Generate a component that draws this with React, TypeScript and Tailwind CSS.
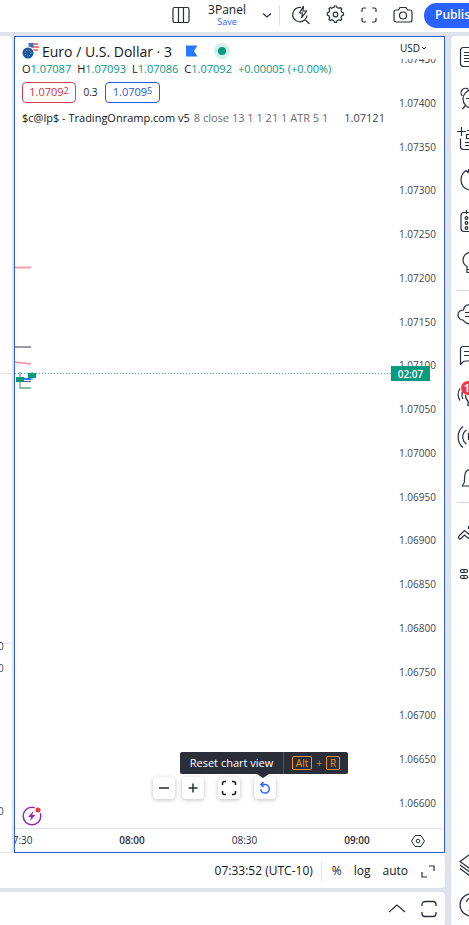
import React from 'react';

interface SideIcon {
  name: string;
  art: React.ReactNode;
}

const prices = [
  '1.07450', '1.07400', '1.07350', '1.07300', '1.07250', '1.07200',
  '1.07150', '1.07100', '1.07050', '1.07000', '1.06950', '1.06900',
  '1.06850', '1.06800', '1.06750', '1.06700', '1.06650', '1.06600',
];

const ohlc = [
  { label: 'O', value: '1.07087' },
  { label: 'H', value: '1.07093' },
  { label: 'L', value: '1.07086' },
  { label: 'C', value: '1.07092' },
];

const toolIcons: SideIcon[] = [
  {
    name: 'Watchlist',
    art: <path d="M20 4.500h-7.500a3 3 0 0 0-3 3v13a3 3 0 0 0 3 3H20M13 9.500h6M13 12.500h6M13 15.500h6M13 18.500h6" />,
  },
  {
    name: 'Alerts',
    art: (
      <>
        <circle cx="21" cy="15" r="9" />
        <path d="M11.500 12a4 4 0 0 1 6-6.500M14.500 21.500l-3 3.500M15 14.500h5" />
      </>
    ),
  },
  {
    name: 'Data window',
    art: <path d="M10.500 2v9M6 6.500h9M9.500 13.500v8a3 3 0 0 0 3 3H20M20 9.500h-4.500v4H20M14 17.500h6M14 20.500h6M16 5.500h4" />,
  },
  {
    name: 'Hotlists',
    art: <path d="M20 8l-2.500-4-.5 2.500-2-2C11.500 7 10 10.500 10 14c0 5 3.500 9.500 8 10" />,
  },
  {
    name: 'Calendar',
    art: (
      <>
        <path d="M20 5.500h-7a3 3 0 0 0-3 3v13a3 3 0 0 0 3 3h7M15.500 3v4" />
        <circle cx="15.500" cy="11" r="1.300" />
        <circle cx="15.500" cy="16" r="1.300" />
        <circle cx="15.500" cy="21" r="1.300" />
      </>
    ),
  },
  {
    name: 'Ideas',
    art: <path d="M20 4.500c-4.500 0-8 3.200-8 7.500 0 3 1.500 5 4 6.500v6h4M16 21.500h4" />,
  },
];

const chatIcons: SideIcon[] = [
  {
    name: 'Public chats',
    art: <path d="M20 4.500c-4 0-7 1.500-7.500 5.500-3 .2-5.500 2-5.500 5s2.500 5 5 5c1.500 2.500 4.500 4 8 4M14 12.500h6M14 16.500h6" />,
  },
  {
    name: 'Private chats',
    art: <path d="M20 5.500h-8a2.500 2.500 0 0 0-2.500 2.500v15.500c1.500-1 2-3.500 5-3.500H20M13 10.500h7M13 14.500h7" />,
  },
  {
    name: 'Ideas stream',
    art: <path d="M9 6.500c-2.500 4-2.500 8 0 12M12 8.500c-1.500 3-1.500 5.500 0 8.500M14.500 13c0 3 1 5 2.500 6v4.500h3M17 20.500h3" />,
  },
  {
    name: 'Streams',
    art: (
      <>
        <path d="M12 3.500c-6.500 5-6.500 16 0 21M15.500 7c-5 3.500-5 10.500 0 14" />
        <rect x="17.500" y="10.500" width="5" height="6" />
      </>
    ),
  },
  {
    name: 'Notifications',
    art: <path d="M20 5.500c-4 0-6 2.500-6.300 6.500l-.4 6.500c-.3 1.500-1.800 1.500-1.800 3.500H20" />,
  },
];

const orderIcons: SideIcon[] = [
  {
    name: 'Order panel',
    art: <path d="M8 18l5.500-5.500 4 3.500 3-3M9.500 21l4-4 4 3.500 3-3M8 18c-1 1.500 0 3.500 1.500 3M17.500 8v2.500h2.500" />,
  },
  {
    name: 'Depth of market',
    art: (
      <>
        <rect x="9.500" y="10.500" width="7" height="3" rx="1.500" />
        <rect x="9.500" y="16.500" width="7" height="3" rx="1.500" />
        <path d="M13 10.500v3M13 16.500v3" />
      </>
    ),
  },
];

const bottomIcons: SideIcon[] = [
  {
    name: 'Object tree',
    art: <path d="M20 3.500l-11 8 11 8M9 15l11 8M9 18.500l10 7.500" />,
  },
  {
    name: 'Help',
    art: (
      <>
        <circle cx="20" cy="14" r="11" />
        <path d="M15.500 11c.5-3 2-4 4.500-4M17.500 19.500h1.500" />
      </>
    ),
  },
];

const SideGroup: React.FC<{ icons: SideIcon[] }> = ({ icons }) => (
  <div className="flex flex-col">
    {icons.map((icon) => (
      <button key={icon.name} type="button" aria-label={icon.name} className="relative flex h-[41px] items-center">
        <svg width="18" height="28" viewBox="0 0 18 28" fill="none" stroke="#2a2e39" strokeWidth="1.2">
          {icon.art}
        </svg>
        {icon.name === 'Ideas stream' && (
          <span className="absolute top-1.5 left-2.5 flex h-3.5 w-3.5 items-center rounded-full bg-[#f23645] pl-[3px] text-[10px] font-bold text-white">
            1
          </span>
        )}
      </button>
    ))}
  </div>
);

const Header: React.FC = () => (
  <header className="flex h-8 shrink-0 items-center justify-end overflow-hidden bg-white pb-0.5">
    <button type="button" aria-label="Select layout" className="mr-3.5">
      <svg width="20" height="20" viewBox="0 0 20 20" fill="none" stroke="#2a2e39" strokeWidth="1.2">
        <rect x="2" y="2.500" width="16" height="15" rx="1.500" />
        <path d="M7.500 2.500v15M12.500 2.500v15" />
      </svg>
    </button>
    <button type="button" className="flex w-11 flex-col items-center">
      <span className="text-[12px] leading-[14px]">3Panel</span>
      <span className="text-[9px] leading-[10px] text-[#2962ff]">Save</span>
    </button>
    <button type="button" aria-label="Layout menu" className="ml-2 w-5">
      <svg width="20" height="20" viewBox="0 0 20 20" fill="none" stroke="#2a2e39" strokeWidth="1.2">
        <path d="M6 8.500l4 3.500 4-3.500" />
      </svg>
    </button>
    <span className="mr-1 ml-0.5 h-5 w-px bg-[#e0e3eb]" />
    <div className="flex items-center gap-2.5 pr-[9px] pl-[5px]">
      <button type="button" aria-label="Quick search">
        <svg width="24" height="24" viewBox="0 0 24 24" fill="none" stroke="#2a2e39" strokeWidth="1.2">
          <path d="M12 4.500a7.200 7.200 0 1 0 6 8M16.500 17l4 4M14.500 3l-4 7h3l-1 5 5-7h-3.500z" />
        </svg>
      </button>
      <button type="button" aria-label="Settings">
        <svg width="24" height="24" viewBox="0 0 24 24" fill="none" stroke="#2a2e39" strokeWidth="1.2">
          <path d="M10 4.500h1l.5-1.500h2l.5 1.500 2 .8 1.500-.8 1.300 1.300-.8 1.500.8 2 1.700.7v2l-1.700.7-.8 2 .8 1.500-1.300 1.500-1.500-.9-2 .9-.5 1.700h-2l-.7-1.700-2-.9-1.500.9-1.400-1.500.8-1.500-.8-2-1.600-.7v-2l1.600-.7.8-2-.8-1.500 1.400-1.300 1.500.8z" />
          <circle cx="12.500" cy="11.500" r="2.300" />
        </svg>
      </button>
      <button type="button" aria-label="Fullscreen mode">
        <svg width="24" height="24" viewBox="0 0 24 24" fill="none" stroke="#2a2e39" strokeWidth="1.2">
          <path d="M5 9V6.500A1.500 1.500 0 0 1 6.500 5H9M15 5h2.500A1.500 1.500 0 0 1 19 6.500V9M19 15v2.500a1.500 1.500 0 0 1-1.500 1.500H15M9 19H6.500A1.500 1.500 0 0 1 5 17.500V15" />
        </svg>
      </button>
      <button type="button" aria-label="Take a snapshot">
        <svg width="24" height="24" viewBox="0 0 24 24" fill="none" stroke="#2a2e39" strokeWidth="1.2">
          <path d="M3 9a2 2 0 0 1 2-2h2.500l1.500-2.500h6L16.500 7H19a2 2 0 0 1 2 2v8a2 2 0 0 1-2 2H5a2 2 0 0 1-2-2z" />
          <circle cx="12" cy="12.500" r="3.500" />
        </svg>
      </button>
    </div>
    <button type="button" className="h-[25px] w-[45px] overflow-hidden rounded-l-full bg-[#2962ff] pl-[11px] text-left text-[12px] font-semibold whitespace-nowrap text-white">
      Publish
    </button>
  </header>
);

const Legend: React.FC = () => (
  <div className="absolute top-1 left-[7px] text-[11px] whitespace-nowrap">
    <div className="flex h-5 items-center text-[14px]">
      <svg width="17" height="18" viewBox="0 0 17 18">
        <circle cx="11.500" cy="5.500" r="5" fill="#fff" />
        <path d="M8 2h8M7 5h10M8 8h8" stroke="#ef5350" strokeWidth="1.500" />
        <path d="M6.500 1h5v4.500h-5z" fill="#3f6fc9" />
        <circle cx="6" cy="11" r="6.500" fill="#fff" />
        <circle cx="6" cy="11" r="5.500" fill="#1556a3" />
        <circle cx="6" cy="11" r="3" fill="none" stroke="#d9b84a" strokeWidth="1" strokeDasharray="1 1.400" />
      </svg>
      <span className="ml-[3px]">Euro / U.S. Dollar · 3</span>
      <svg className="ml-3.5" width="12" height="12" viewBox="0 0 12 12">
        <path d="M0 0.500h11.500L8 6l3.500 5.500H0z" fill="#2979ff" />
      </svg>
      <span className="ml-4 flex h-4 w-4 items-center justify-center rounded-full bg-[#d5f0eb]">
        <span className="h-2 w-2 rounded-full bg-[#089981]" />
      </span>
    </div>
    <div className="flex h-4 items-center gap-1.5 text-[#089981]">
      {ohlc.map((item) => (
        <span key={item.label}>
          <span className="text-[#131722]">{item.label}</span>
          {item.value}
        </span>
      ))}
      <span>+0.00005 (+0.00%)</span>
    </div>
    <div className="mt-[5px] flex items-center">
      <button type="button" className="flex h-[21px] w-[54px] items-center justify-center rounded-[4px] border border-[#d2414d] text-[#d8303f]">
        1.0709<sup className="top-[-2px] text-[9px]">2</sup>
      </button>
      <span className="w-[29px] text-center text-[10px]">0.3</span>
      <button type="button" className="flex h-[21px] w-[55px] items-center justify-center rounded-[4px] border border-[#2c5bd8] text-[#2456d8]">
        1.0709<sup className="top-[-2px] text-[9px]">5</sup>
      </button>
    </div>
    <div className="mt-[7px] flex h-4 items-center">
      <span>$c@lp$ - TradingOnramp.com v5</span>
      <span className="ml-1 text-[#6a6d78]">8 close 13 1 1 21 1 ATR 5 1</span>
      <span className="ml-4 text-[#434651]">1.07121</span>
    </div>
  </div>
);

const controlClass = 'flex h-[22px] w-[22px] items-center justify-center rounded-[4px] bg-white shadow-[0_1px_4px_rgba(0,0,0,0.25)]';

const ChartControls: React.FC = () => (
  <div className="absolute bottom-[29px] left-[138px]">
    <div className="relative ml-[27px] flex h-[22px] w-[168px] items-center rounded-[2px] bg-[#2a2e39] text-[11px] whitespace-nowrap text-white" role="tooltip">
      <span className="flex-1 text-center">Reset chart view</span>
      <span className="flex h-full w-[65px] items-center justify-center gap-1 border-l border-[#50535e] text-[10px] text-[#f7931a]">
        <kbd className="rounded-[2px] border border-[#f7931a] px-[3px] font-[inherit] leading-[12px]">Alt</kbd>
        <span>+</span>
        <kbd className="rounded-[2px] border border-[#f7931a] px-[3px] font-[inherit] leading-[12px]">R</kbd>
      </span>
      <span className="absolute top-full left-[77px] border-x-[6px] border-t-[4px] border-x-transparent border-t-[#2a2e39]" />
    </div>
    <div className="mt-[3px] flex">
      <button type="button" aria-label="Zoom out" className={controlClass}>
        <svg width="16" height="16" viewBox="0 0 16 16" stroke="#2a2e39" strokeWidth="1.500"><path d="M3 8h10" /></svg>
      </button>
      <button type="button" aria-label="Zoom in" className={`${controlClass} ml-[7px]`}>
        <svg width="16" height="16" viewBox="0 0 16 16" stroke="#2a2e39" strokeWidth="1.500"><path d="M3.500 8h9M8 3.500v9" /></svg>
      </button>
      <button type="button" aria-label="Maximize chart" className={`${controlClass} ml-[14px]`}>
        <svg width="16" height="16" viewBox="0 0 16 16" fill="none" stroke="#131722" strokeWidth="1.500">
          <path d="M1.500 5V3.500a2 2 0 0 1 2-2H5M11 1.500h1.500a2 2 0 0 1 2 2V5M14.500 11v1.500a2 2 0 0 1-2 2H11M5 14.500H3.500a2 2 0 0 1-2-2V11" />
        </svg>
      </button>
      <button type="button" aria-label="Reset chart" className={`${controlClass} ml-[14px]`}>
        <svg width="16" height="16" viewBox="0 0 16 16" fill="none" stroke="#2962ff" strokeWidth="1.500">
          <path d="M5 4.500H8a4.300 4.300 0 1 1-4.300 4.800M6.500 2L4 4.500 6.500 7" />
        </svg>
      </button>
    </div>
  </div>
);

const Chart: React.FC = () => (
  <section className="flex min-w-0 flex-1 flex-col border border-[#2f5bd3] bg-white">
    <div className="flex min-h-0 flex-1">
      <div className="relative min-w-0 flex-1">
        <div className="absolute inset-x-0 top-[336px] h-px bg-[repeating-linear-gradient(90deg,#3fb09d_0px,#3fb09d_1px,transparent_1px,transparent_3px)]" />
        <svg className="absolute top-[220px] left-0" width="24" height="140" viewBox="0 0 24 140" fill="none">
          <path d="M0 10.500h16" stroke="#f7a1a7" strokeWidth="2" />
          <path d="M0 90h16" stroke="#9b9ca1" strokeWidth="2" />
          <path d="M0 105l16 2" stroke="#f28b92" strokeWidth="1.500" />
          <path d="M5 115v16h11" stroke="#5fae7c" strokeWidth="1.300" />
          <path d="M7 124.500h9" stroke="#6a4f9c" />
          <path d="M7 122h9" stroke="#2979ff" strokeWidth="2" />
          <path d="M17 115v8" stroke="#089981" />
          <rect x="1" y="120" width="8" height="5" fill="#089981" />
          <rect x="13" y="116" width="8" height="5" fill="#089981" />
        </svg>
        <Legend />
        <ChartControls />
        <button type="button" aria-label="Go to events" className="absolute bottom-0.5 left-1.5">
          <svg width="22" height="20" viewBox="0 0 22 20" fill="none">
            <circle cx="11" cy="10" r="8.800" stroke="#9c27b0" strokeWidth="1.500" />
            <path d="M12.500 5L7 11h3.200L9 15l5.500-6h-3.200z" fill="#9c27b0" />
            <circle cx="17" cy="4" r="3.800" fill="#fff" />
            <circle cx="17" cy="4" r="2.500" fill="#f23645" />
          </svg>
        </button>
      </div>
      <div className="relative flex w-[53px] flex-col justify-between pt-4 pb-[19px] text-[10px] leading-[12px] text-[#434651]">
        {prices.map((price) => (
          <span key={price} className="pl-2">{price}</span>
        ))}
        <button type="button" className="absolute top-0 left-0 flex h-[22px] w-full items-center bg-white pl-[9px] text-[10px] text-[#131722]">
          USD
          <svg width="8" height="8" viewBox="0 0 8 8" fill="none" stroke="#131722"><path d="M2 3l2 2 2-2" /></svg>
        </button>
        <span className="absolute top-[329px] left-0 flex h-[15px] w-[39px] items-center justify-center bg-[#089981] text-[10px] font-semibold text-white">
          02:07
        </span>
      </div>
    </div>
    <div className="relative flex h-6 shrink-0 items-center overflow-hidden border-t border-[#e0e3eb] text-[10px] font-semibold text-[#2a2e39]">
      <span className="-ml-2 w-[70px] font-normal">07:30</span>
      <span className="w-[110px] text-center">08:00</span>
      <span className="w-[115px] text-center font-normal">08:30</span>
      <span className="w-[110px] text-center">09:00</span>
      <button type="button" aria-label="Axis settings" className="absolute right-[18px]">
        <svg width="16" height="16" viewBox="0 0 16 16" fill="none" stroke="#2a2e39">
          <path d="M5 2.500h6L14.500 8 11 13.500H5L1.500 8z" />
          <circle cx="8" cy="8" r="1.800" />
        </svg>
      </button>
    </div>
  </section>
);

const App: React.FC = () => {
  return (
    <div className="flex h-screen flex-col gap-1 overflow-hidden bg-[#e0e3eb] font-['Open_Sans','Noto_Sans',sans-serif] text-[#131722]">
      <Header />
      <div className="flex min-h-0 flex-1 gap-1.5">
        <div className="flex min-w-0 flex-1 flex-col">
          <main className="flex min-h-0 flex-1 gap-0.5">
            <section className="flex w-3 flex-col overflow-hidden rounded-tr-[4px] border-b border-[#e0e3eb] bg-white text-[10px] text-[#434651]">
              <div className="h-[338px] border-b border-[#e0e3eb]" />
              <div className="h-[270px] border-b border-[#e0e3eb]" />
              <span className="-mt-1.5 -ml-0.5 h-4 leading-4">0</span>
              <span className="mt-1.5 -ml-0.5 h-4 leading-4">0</span>
              <span className="mt-[127px] -ml-0.5 h-4 leading-4">0</span>
            </section>
            <Chart />
          </main>
          <div className="mb-1 flex h-[35px] shrink-0 items-center justify-end rounded-br-[4px] bg-white pr-[9px] text-[12px]">
            <button type="button">07:33:52 (UTC-10)</button>
            <span className="mr-2.5 ml-2 h-5 w-px bg-[#e0e3eb]" />
            <div className="flex items-center gap-3">
              <button type="button">%</button>
              <button type="button">log</button>
              <button type="button">auto</button>
              <button type="button" aria-label="Maximize">
                <svg width="16" height="16" viewBox="0 0 16 16" fill="none" stroke="#2a2e39" strokeWidth="1.200">
                  <path d="M2 9v5h5M9 3h5v5" />
                </svg>
              </button>
            </div>
          </div>
          <div className="flex h-[33px] shrink-0 items-center justify-end gap-3 rounded-tr-[4px] bg-white pr-1.5">
            <button type="button" aria-label="Open panel">
              <svg width="20" height="20" viewBox="0 0 20 20" fill="none" stroke="#2a2e39" strokeWidth="1.200">
                <path d="M2 13l8-7 8 7" />
              </svg>
            </button>
            <button type="button" aria-label="Maximize panel">
              <svg width="20" height="20" viewBox="0 0 20 20" fill="none" stroke="#2a2e39" strokeWidth="1.300">
                <path d="M3 7V5.500a3 3 0 0 1 3-3h8a3 3 0 0 1 3 3V7M3 13v1.500a3 3 0 0 0 3 3h8a3 3 0 0 0 3-3V13" />
              </svg>
            </button>
          </div>
        </div>
        <aside className="flex w-[18px] shrink-0 flex-col overflow-hidden rounded-tl-[4px] bg-white">
          <SideGroup icons={toolIcons} />
          <div className="mt-2 mb-0.5 ml-1.5 h-px shrink-0 bg-[#d1d4dc]" />
          <SideGroup icons={chatIcons} />
          <div className="mt-1 mb-2 ml-1.5 h-px shrink-0 bg-[#d1d4dc]" />
          <SideGroup icons={orderIcons} />
          <div className="mt-auto">
            <SideGroup icons={bottomIcons} />
          </div>
        </aside>
      </div>
    </div>
  );
};

export default App;
